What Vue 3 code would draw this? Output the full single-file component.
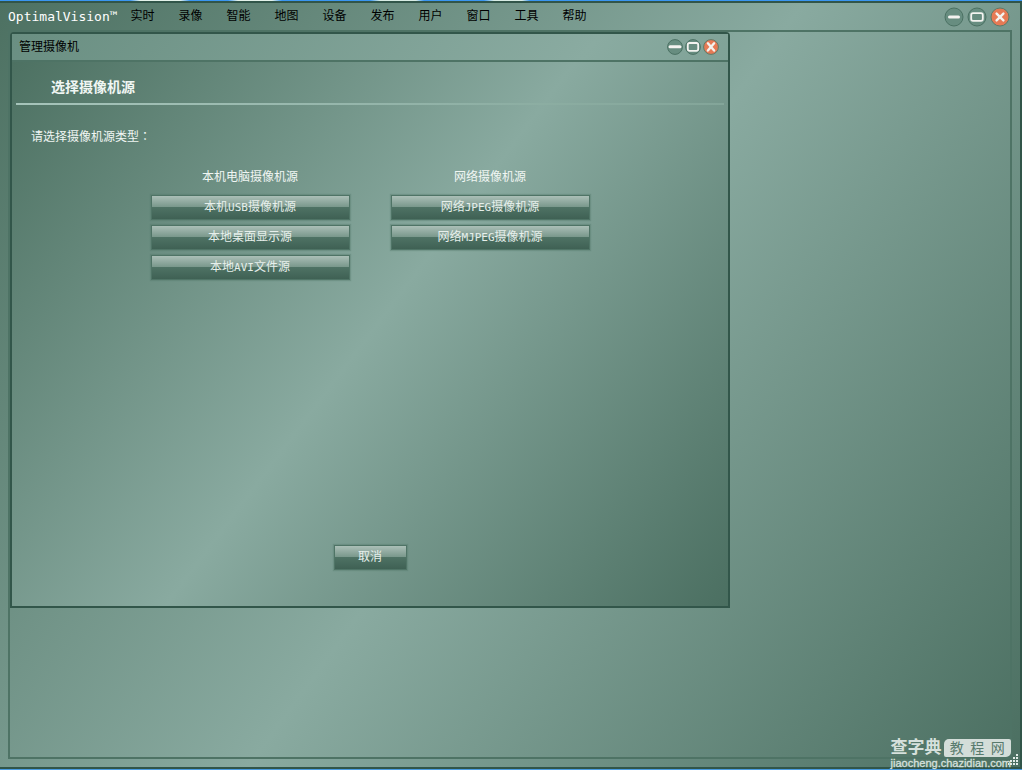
<script setup>
const menus = ['实时', '录像', '智能', '地图', '设备', '发布', '用户', '窗口', '工具', '帮助']

const groups = [
  {
    title: '本机电脑摄像机源',
    sources: [
      ['本机', 'USB', '摄像机源'],
      ['本地桌面显示源', '', ''],
      ['本地', 'AVI', '文件源'],
    ],
  },
  {
    title: '网络摄像机源',
    sources: [
      ['网络', 'JPEG', '摄像机源'],
      ['网络', 'MJPEG', '摄像机源'],
    ],
  },
]

const controls = [
  { kind: 'min', label: '最小化' },
  { kind: 'max', label: '最大化' },
  { kind: 'close', label: '关闭' },
]
</script>

<template>
  <div class="desktop">
    <div class="app-window">
      <header class="app-bar">
        <h1 class="brand">OptimalVision™</h1>
        <nav class="menu">
          <button v-for="m in menus" :key="m" type="button" class="menu-item">{{ m }}</button>
        </nav>
        <div class="controls">
          <button v-for="c in controls" :key="c.kind" type="button" class="control" :aria-label="c.label">
            <svg viewBox="0 0 20 20" aria-hidden="true">
              <circle cx="10" cy="10" r="9" :class="c.kind === 'close' ? 'disc-close' : 'disc'" />
              <path v-if="c.kind === 'min'" d="M5.5 10h9" class="mark bar" />
              <rect v-else-if="c.kind === 'max'" x="4.2" y="6.2" width="11.6" height="7.6" rx="1.8" class="mark box" />
              <path v-else d="M6.6 6.6l6.8 6.8M13.4 6.6l-6.8 6.8" class="mark cross" />
            </svg>
          </button>
        </div>
      </header>

      <main class="workspace">
        <section class="dialog" role="dialog" aria-labelledby="dialog-title">
          <header class="dialog-bar">
            <h2 id="dialog-title" class="dialog-title">管理摄像机</h2>
            <div class="controls small">
              <button v-for="c in controls" :key="c.kind" type="button" class="control" :aria-label="c.label">
                <svg viewBox="0 0 16 16" aria-hidden="true">
                  <circle cx="8" cy="8" r="7.4" :class="c.kind === 'close' ? 'disc-close' : 'disc'" />
                  <path v-if="c.kind === 'min'" d="M3 7.8h10" class="mark bar" />
                  <rect v-else-if="c.kind === 'max'" x="2.8" y="4" width="10.4" height="7.8" rx="1.8" class="mark box" />
                  <path v-else d="M4.9 4.3l6.2 7.2M11.1 4.3l-6.2 7.2" class="mark cross" />
                </svg>
              </button>
            </div>
          </header>
          <div class="dialog-body">
            <h3 class="heading">选择摄像机源</h3>
            <p class="prompt">请选择摄像机源类型<span class="colon">：</span></p>
            <div class="groups">
              <div v-for="g in groups" :key="g.title" class="group">
                <h4 class="group-title">{{ g.title }}</h4>
                <button v-for="s in g.sources" :key="s.join('')" type="button" class="push">
                  {{ s[0] }}<span v-if="s[1]" class="latin">{{ s[1] }}</span>{{ s[2] }}
                </button>
              </div>
            </div>
            <button type="button" class="push cancel">取消</button>
          </div>
        </section>
      </main>

      <div class="watermark">
        <div class="mark-row">
          <strong class="mark-name">查字典</strong>
          <span class="mark-badge"><span>教</span><span>程</span><span>网</span></span>
        </div>
        <div class="mark-url">jiaocheng.chazidian.com</div>
      </div>
      <svg class="grip" viewBox="0 0 10 12" aria-hidden="true">
        <path d="M8 0h2v2h-2zM5 3h2v2h-2zM8 3h2v2h-2zM2 6h2v2h-2zM5 6h2v2h-2zM8 6h2v2h-2zM0 9h1v2h-1zM2 9h2v2h-2zM5 9h2v2h-2zM8 9h2v2h-2z" />
      </svg>
    </div>
  </div>
</template>

<style>
body {
  margin: 0;
}
</style>

<style scoped>
.desktop {
  box-sizing: border-box;
  min-height: 100vh;
  display: flex;
  padding: 1px 0;
  background: linear-gradient(90deg, #3a96f2 0 130px, #e4f2ea 140px 180px, #3a96f2 190px 228px, #e4f2ea 238px 272px, #3a96f2 282px 370px, #d8ece4 380px 416px, #3a96f2 424px 484px, #d8ece4 494px 522px, #3a96f2 530px) top / 100% 4px no-repeat #4a9be0;
  font: 12px/16px "DejaVu Sans Mono", "Noto Sans CJK SC", sans-serif;
  color: #f0f6f3;
}

.app-window {
  position: relative;
  box-sizing: border-box;
  flex: 1;
  display: flex;
  flex-direction: column;
  padding: 0 8px 8px;
  border: solid #315549;
  border-width: 2px 2px 2px 0;
  background: linear-gradient(126deg, #4d7162, #89aaa0 51%, #4b6f61);
}

h1, h2, h3, h4, p {
  margin: 0;
  font-size: inherit;
  font-weight: normal;
}

button {
  margin: 0;
  padding: 0;
  border: 0;
  background: none;
  font: inherit;
  color: inherit;
}

.app-bar {
  display: flex;
  align-items: center;
  height: 27px;
}

.brand {
  font-size: 13px;
  color: #ffffff;
}

.menu {
  display: flex;
  flex: 1;
  padding-left: 1px;
}

.menu-item {
  width: 48px;
  padding-bottom: 1px;
  color: #000000;
}

.controls {
  display: flex;
  gap: 3px;
}

.app-bar > .controls {
  padding-right: 2px;
}

.control {
  width: 20px;
  height: 20px;
}

.control svg {
  display: block;
  width: 100%;
  height: 100%;
}

.small {
  gap: 2px;
}

.small .control {
  width: 16px;
  height: 16px;
}

.disc {
  fill: #678d80;
  stroke: #4b7163;
}

.disc-close {
  fill: #e67a55;
  stroke: #5f7a68;
}

.mark {
  fill: none;
  stroke: #f3f3f0;
  stroke-linecap: round;
}

.bar {
  stroke-width: 3;
}

.box {
  stroke-width: 1.8;
}

.cross {
  stroke-width: 2.4;
}

.workspace {
  flex: 1;
  border: 2px solid #4e7365;
}

.dialog {
  box-sizing: border-box;
  max-width: 720px;
  border: 2px solid #32564a;
  border-radius: 4px 4px 0 0;
}

.dialog-bar {
  display: flex;
  align-items: center;
  justify-content: space-between;
  height: 26px;
  padding: 0 9px 0 7px;
  border-bottom: 2px solid #4e7365;
  background: linear-gradient(127deg, #6a8f82, #8aaba1 80%, #7fa297);
}

.dialog-title {
  color: #000000;
}

.dialog-body {
  display: flex;
  flex-direction: column;
  box-sizing: border-box;
  min-height: 544px;
  padding: 0 4px 36px;
  background: linear-gradient(127deg, #4d7162, #89aaa0 50%, #4b6f61);
}

.heading {
  padding: 15px 35px 6px;
  font-size: 14px;
  line-height: 20px;
  font-weight: bold;
  border-bottom: 2px solid;
  border-image: linear-gradient(90deg, #a6c4ba, #91b2a7 60%, #83a599) 1;
}

.prompt {
  padding: 24px 15px 0;
}

.colon {
  font-family: "Noto Sans CJK TC", sans-serif;
  line-height: 1;
}

.groups {
  display: flex;
  justify-content: center;
  gap: 41px;
  padding-top: 24px;
}

.group {
  display: flex;
  flex-direction: column;
  gap: 5px;
  width: 199px;
}

.group-title {
  padding-bottom: 5px;
  text-align: center;
}

.push {
  box-sizing: border-box;
  height: 25px;
  padding-bottom: 2px;
  border: 1px solid #4f7466;
  box-shadow: 0 0 1px 1px rgba(79, 117, 103, 0.35);
  background: linear-gradient(#abbfb7, #7b998d 46%, #4f7365 47%, #3f6154);
  text-align: center;
  color: #e6efeb;
}

.latin {
  font-size: 11px;
  line-height: 1;
}

.cancel {
  width: 73px;
  margin: auto auto 0;
}

.watermark {
  position: absolute;
  right: 9px;
  bottom: -2px;
  color: #d6e0dc;
  font-family: "Liberation Sans", "Noto Sans CJK SC", sans-serif;
}

.mark-row {
  display: flex;
  align-items: center;
  gap: 2px;
}

.mark-name {
  font-size: 17px;
  line-height: 18px;
}

.mark-badge {
  display: flex;
  flex: 1;
  justify-content: space-around;
  padding: 0 3px;
  border-radius: 5px 2px;
  background: #d3ddd9;
  color: #587b6e;
  font-size: 14px;
  line-height: 18px;
}

.mark-url {
  font-size: 11px;
  line-height: 12px;
  -webkit-text-stroke: 0.3px;
}

.grip {
  position: absolute;
  right: 2px;
  bottom: 1px;
  width: 10px;
  height: 12px;
  fill: #e2ebe7;
}
</style>
